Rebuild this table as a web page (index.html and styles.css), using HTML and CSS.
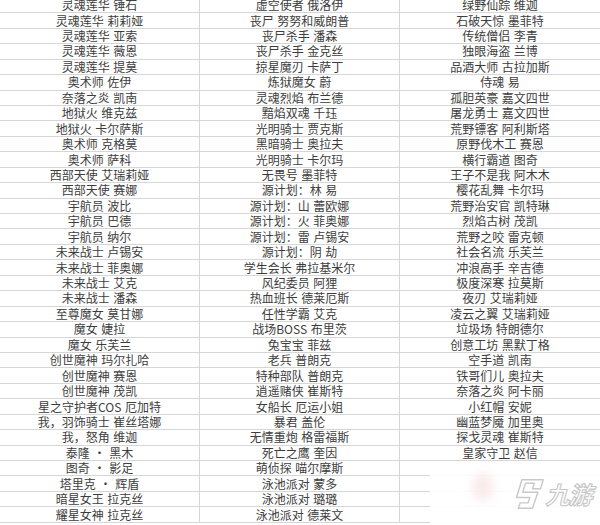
FILE: index.html
```html
<!DOCTYPE html>
<html lang="zh-CN">
<head>
<meta charset="utf-8">
<title>皮肤列表</title>
<link rel="stylesheet" href="styles.css">
</head>
<body>
<div class="page">
  <div class="sheet">
    <div class="cell">灵魂莲华 锤石</div><div class="cell">虚空使者 俄洛伊</div><div class="cell">绿野仙踪 维迦</div>
    <div class="cell">灵魂莲华 莉莉娅</div><div class="cell">丧尸 努努和威朗普</div><div class="cell">石破天惊 墨菲特</div>
    <div class="cell">灵魂莲华 亚索</div><div class="cell">丧尸杀手 潘森</div><div class="cell">传统僧侣 李青</div>
    <div class="cell">灵魂莲华 薇恩</div><div class="cell">丧尸杀手 金克丝</div><div class="cell">独眼海盗 兰博</div>
    <div class="cell">灵魂莲华 提莫</div><div class="cell">掠星魔刃 卡萨丁</div><div class="cell">品酒大师 古拉加斯</div>
    <div class="cell">奥术师 佐伊</div><div class="cell">炼狱魔女 蔚</div><div class="cell">侍魂 易</div>
    <div class="cell">奈落之炎 凯南</div><div class="cell">灵魂烈焰 布兰德</div><div class="cell">孤胆英豪 嘉文四世</div>
    <div class="cell">地狱火 维克兹</div><div class="cell">黯焰双魂 千珏</div><div class="cell">屠龙勇士 嘉文四世</div>
    <div class="cell">地狱火 卡尔萨斯</div><div class="cell">光明骑士 贾克斯</div><div class="cell">荒野镖客 阿利斯塔</div>
    <div class="cell">奥术师 克格莫</div><div class="cell">黑暗骑士 奥拉夫</div><div class="cell">原野伐木工 赛恩</div>
    <div class="cell">奥术师 萨科</div><div class="cell">光明骑士 卡尔玛</div><div class="cell">横行霸道 图奇</div>
    <div class="cell">西部天使 艾瑞莉娅</div><div class="cell">无畏号 墨菲特</div><div class="cell">王子不是我 阿木木</div>
    <div class="cell">西部天使 赛娜</div><div class="cell">源计划：林 易</div><div class="cell">樱花乱舞 卡尔玛</div>
    <div class="cell">宇航员 波比</div><div class="cell">源计划：山 蕾欧娜</div><div class="cell">荒野治安官 凯特琳</div>
    <div class="cell">宇航员 巴德</div><div class="cell">源计划：火 菲奥娜</div><div class="cell">烈焰古树 茂凯</div>
    <div class="cell">宇航员 纳尔</div><div class="cell">源计划：雷 卢锡安</div><div class="cell">荒野之咬 雷克顿</div>
    <div class="cell">未来战士 卢锡安</div><div class="cell">源计划：阴 劫</div><div class="cell">社会名流 乐芙兰</div>
    <div class="cell">未来战士 菲奥娜</div><div class="cell">学生会长 弗拉基米尔</div><div class="cell">冲浪高手 辛吉德</div>
    <div class="cell">未来战士 艾克</div><div class="cell">风纪委员 阿狸</div><div class="cell">极度深寒 拉莫斯</div>
    <div class="cell">未来战士 潘森</div><div class="cell">热血班长 德莱厄斯</div><div class="cell">夜刃 艾瑞莉娅</div>
    <div class="cell">至尊魔女 莫甘娜</div><div class="cell">任性学霸 艾克</div><div class="cell">凌云之翼 艾瑞莉娅</div>
    <div class="cell">魔女 婕拉</div><div class="cell">战场BOSS 布里茨</div><div class="cell">垃圾场 特朗德尔</div>
    <div class="cell">魔女 乐芙兰</div><div class="cell">兔宝宝 菲兹</div><div class="cell">创意工坊 黑默丁格</div>
    <div class="cell">创世魔神 玛尔扎哈</div><div class="cell">老兵 普朗克</div><div class="cell">空手道 凯南</div>
    <div class="cell">创世魔神 赛恩</div><div class="cell">特种部队 普朗克</div><div class="cell">铁哥们儿 奥拉夫</div>
    <div class="cell">创世魔神 茂凯</div><div class="cell">逍遥赌侠 崔斯特</div><div class="cell">奈落之炎 阿卡丽</div>
    <div class="cell">星之守护者COS 厄加特</div><div class="cell">女船长 厄运小姐</div><div class="cell">小红帽 安妮</div>
    <div class="cell">我，羽饰骑士 崔丝塔娜</div><div class="cell">暴君 盖伦</div><div class="cell">幽蓝梦魇 加里奥</div>
    <div class="cell">我，怒角 维迦</div><div class="cell">无情重炮 格雷福斯</div><div class="cell">探戈灵魂 崔斯特</div>
    <div class="cell">泰隆 · 黑木</div><div class="cell">死亡之鹰 奎因</div><div class="cell">皇家守卫 赵信</div>
    <div class="cell">图奇 · 影足</div><div class="cell">萌侦探 喵尔摩斯</div><div class="cell"></div>
    <div class="cell">塔里克 · 辉盾</div><div class="cell">泳池派对 蒙多</div><div class="cell"></div>
    <div class="cell">暗星女王 拉克丝</div><div class="cell">泳池派对 璐璐</div><div class="cell"></div>
    <div class="cell">耀星女神 拉克丝</div><div class="cell">泳池派对 德莱文</div><div class="cell"></div>
  </div>
  <div class="watermark">
    <div class="blob"></div>
    <svg class="logo" viewBox="0 0 40 36" width="36" height="32">
      <path d="M12 2 H36 L33 12 H24 L26 6 H16 L13 16 H30 L24 34 H8 L10 28 H19 L21 22 H6 Z" fill="none" stroke="#c9c9c9" stroke-width="1.6" stroke-linejoin="round"/>
    </svg>
    <span class="brand">九游</span>
  </div>
</div>
</body>
</html>
```

FILE: styles.css
```css
html, body {
  margin: 0;
  padding: 0;
  background: #ffffff;
}

.page {
  position: relative;
  width: 600px;
  height: 525px;
  overflow: hidden;
}

.sheet {
  display: grid;
  grid-template-columns: 200px 200px 200px;
  grid-auto-rows: 15.44px;
  margin-top: -2.1px;
  font-family: "Noto Sans CJK SC", "Microsoft YaHei", sans-serif;
  font-size: 12px;
  color: #3d3d3d;
}

.cell {
  box-sizing: border-box;
  border-bottom: 1px solid #d6d6d6;
  display: flex;
  align-items: center;
  justify-content: center;
  line-height: 14px;
  white-space: nowrap;
  word-spacing: 1px;
}

.cell:nth-child(3n+1),
.cell:nth-child(3n+2) {
  border-right: 1px solid #d6d6d6;
}

.watermark {
  position: absolute;
  left: 430px;
  top: 465px;
  width: 170px;
  height: 60px;
  box-sizing: border-box;
  background: rgba(255, 255, 255, 0.92);
  display: flex;
  align-items: center;
  justify-content: flex-end;
  gap: 1px;
  padding-right: 6px;
}

.blob {
  position: absolute;
  left: 42px;
  top: 8px;
  width: 22px;
  height: 28px;
  border-radius: 50%;
  background: rgba(240, 200, 200, 0.35);
  filter: blur(5px);
}

.logo {
  margin-top: -2px;
}

.brand {
  font-family: "Noto Sans CJK SC", sans-serif;
  font-size: 24px;
  font-weight: 700;
  color: #ffffff;
  -webkit-text-stroke: 1.1px #c6c6c6;
  transform: skewX(-14deg);
  letter-spacing: -1px;
  line-height: 30px;
  margin-top: -2px;
}
```
